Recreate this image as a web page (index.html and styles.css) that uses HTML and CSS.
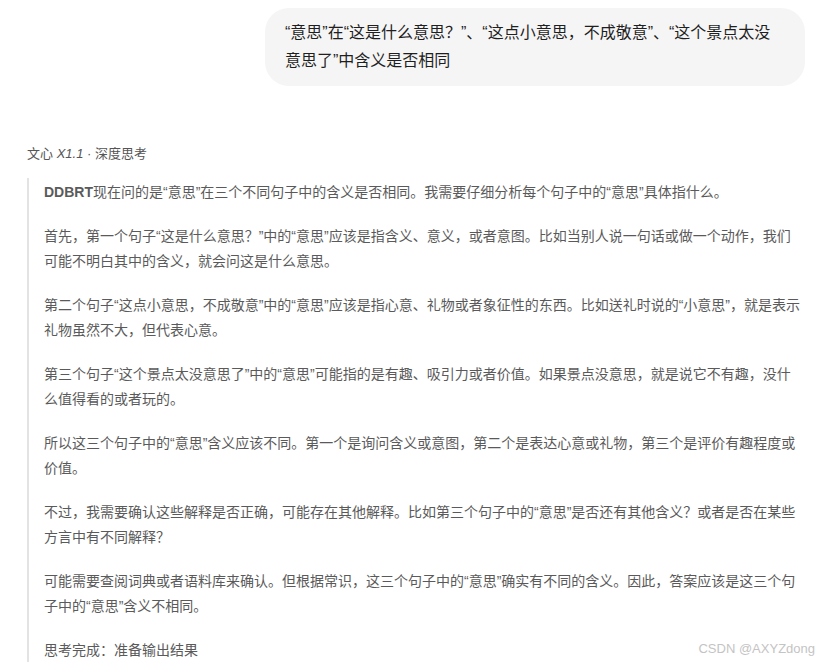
FILE: index.html
```html
<!DOCTYPE html>
<html lang="zh-CN">
<head>
<meta charset="utf-8">
<title>文心 X1.1 深度思考</title>
<link rel="stylesheet" href="styles.css">
</head>
<body>
<div class="page">
  <div class="user-row">
    <div class="bubble">“意思”在“这是什么意思？”、“这点小意思，不成敬意”、“这个景点太没<br>意思了”中含义是否相同</div>
  </div>
  <div class="model">文心 <i>X1.1</i> · 深度思考</div>
  <div class="think">
    <p><b>DDBRT</b>现在问的是“意思”在三个不同句子中的含义是否相同。我需要仔细分析每个句子中的“意思”具体指什么。</p>
    <p>首先，第一个句子“这是什么意思？”中的“意思”应该是指含义、意义，或者意图。比如当别人说一句话或做一个动作，我们<br>可能不明白其中的含义，就会问这是什么意思。</p>
    <p>第二个句子“这点小意思，不成敬意”中的“意思”应该是指心意、礼物或者象征性的东西。比如送礼时说的“小意思”，就是表示<br>礼物虽然不大，但代表心意。</p>
    <p>第三个句子“这个景点太没意思了”中的“意思”可能指的是有趣、吸引力或者价值。如果景点没意思，就是说它不有趣，没什<br>么值得看的或者玩的。</p>
    <p>所以这三个句子中的“意思”含义应该不同。第一个是询问含义或意图，第二个是表达心意或礼物，第三个是评价有趣程度或<br>价值。</p>
    <p>不过，我需要确认这些解释是否正确，可能存在其他解释。比如第三个句子中的“意思”是否还有其他含义？或者是否在某些<br>方言中有不同解释？</p>
    <p>可能需要查阅词典或者语料库来确认。但根据常识，这三个句子中的“意思”确实有不同的含义。因此，答案应该是这三个句<br>子中的“意思”含义不相同。</p>
    <p>思考完成：准备输出结果</p>
  </div>
  <div class="watermark">CSDN @AXYZdong</div>
</div>
</body>
</html>
```
FILE: styles.css
```css
html, body {
  margin: 0;
  padding: 0;
  background: #ffffff;
  height: 100%;
  overflow: hidden;
}
.page {
  font-family: "Liberation Sans", "Noto Sans CJK SC", sans-serif;
  height: 662px;
  position: relative;
  overflow: hidden;
}
.user-row {
  display: flex;
  justify-content: flex-end;
  padding: 8px 24px 0 0;
}
.bubble {
  width: 500px;
  background: #f5f5f5;
  border-radius: 24px;
  padding: 11px 20px;
  font-size: 16px;
  line-height: 28px;
  color: #1f1f1f;
  white-space: nowrap;
}
.model {
  margin: 58px 0 0 27px;
  font-size: 13px;
  line-height: 20px;
  color: #555555;
}
.think {
  margin: 14px 0 0 27px;
  border-left: 2px solid #e3e3e3;
  padding: 2px 0 30px 15px;
  font-size: 14px;
  line-height: 25px;
  color: #5a5a5a;
}
.think p {
  margin: 0 0 19px 0;
  white-space: nowrap;
}
.think p:nth-child(n+5) {
  margin-bottom: 19px;
}
.think b {
  font-weight: 700;
}
.watermark {
  position: absolute;
  right: 14px;
  bottom: 6px;
  font-size: 13px;
  color: #c4c4c4;
}
```
